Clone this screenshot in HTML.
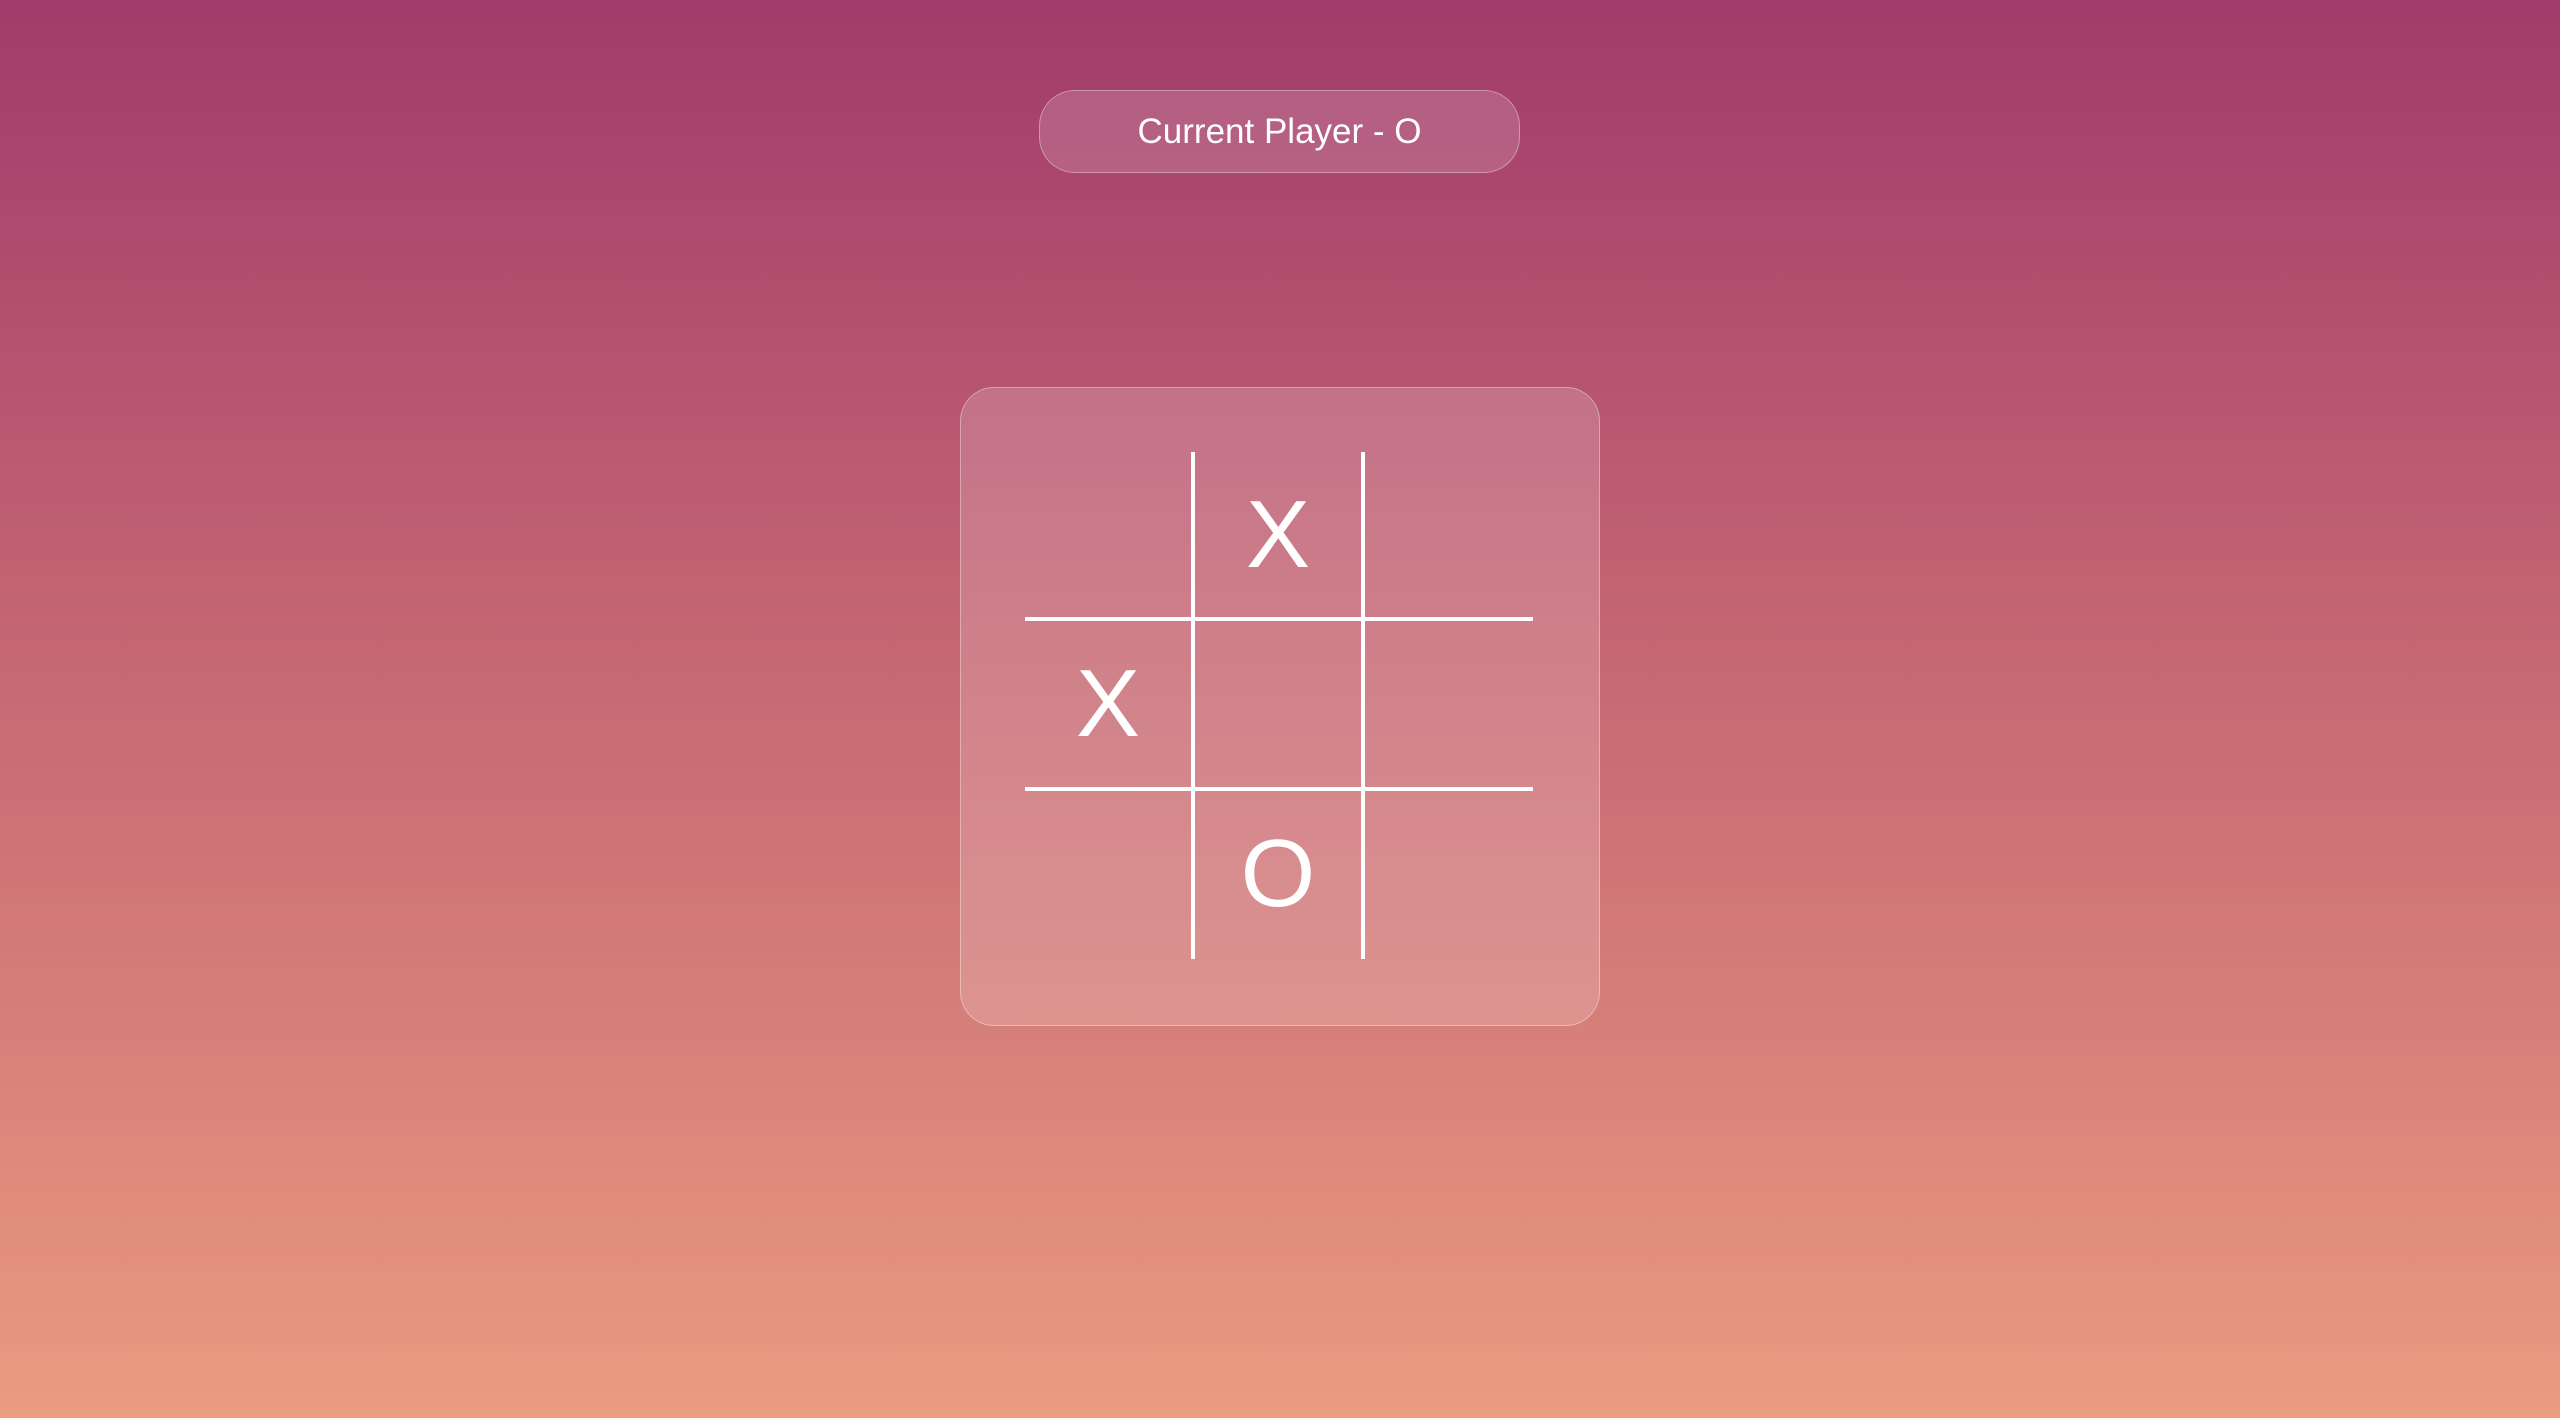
<!DOCTYPE html>
<html><head><meta charset="utf-8"><style>
html,body{margin:0;padding:0;}
body{width:2560px;height:1418px;position:relative;overflow:hidden;
background:linear-gradient(180deg,#a13b6b 0%,#c56673 45%,#d8827a 75%,#ea9c80 100%);
font-family:"Liberation Sans",sans-serif;color:#fff;}
.pill{position:absolute;left:1039px;top:90px;width:479px;height:81px;border:1px solid rgba(255,255,255,0.35);
background:rgba(255,255,255,0.15);border-radius:36px;display:flex;align-items:center;justify-content:center;font-size:35px;}
.board{position:absolute;left:960px;top:387px;width:638px;height:637px;border:1px solid rgba(255,255,255,0.35);
background:rgba(255,255,255,0.17);border-radius:34px;}
.l{position:absolute;background:#fff;}
.m{position:absolute;font-size:96px;width:166px;text-align:center;line-height:166px;}
</style></head><body>
<div class="pill">Current Player - O</div>
<div class="board"></div>
<div class="l" style="left:1191px;top:452px;width:4px;height:507px"></div>
<div class="l" style="left:1361px;top:452px;width:4px;height:507px"></div>
<div class="l" style="left:1025px;top:617px;width:508px;height:4px"></div>
<div class="l" style="left:1025px;top:787px;width:508px;height:4px"></div>
<div class="m" style="left:1195px;top:452px">X</div>
<div class="m" style="left:1025px;top:621px">X</div>
<div class="m" style="left:1195px;top:791px">O</div>
</body></html>
